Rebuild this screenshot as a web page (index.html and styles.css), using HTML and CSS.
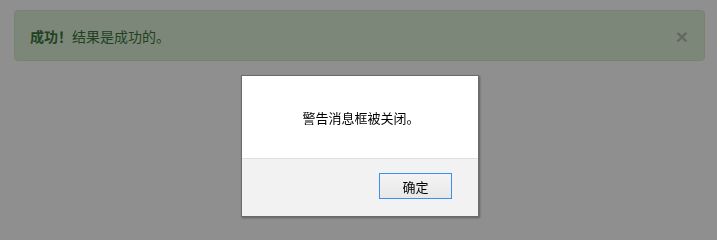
FILE: index.html
```html
<!DOCTYPE html>
<html lang="zh">
<head>
<meta charset="utf-8">
<link rel="stylesheet" href="styles.css">
</head>
<body>
<div class="page">
  <div class="alert">
    <span class="msg"><strong>成功！</strong>结果是成功的。</span>
    <span class="close">×</span>
  </div>
</div>
<div class="overlay"></div>
<div class="dialog">
  <div class="dialog-body">警告消息框被关闭。</div>
  <div class="dialog-foot"><button class="ok">确定</button></div>
</div>
</body>
</html>
```
FILE: styles.css
```css
html, body { margin: 0; padding: 0; }
body {
  width: 717px; height: 233px; overflow: hidden;
  background: #ffffff;
  font-family: "Noto Sans CJK SC", "Liberation Sans", sans-serif;
}
.page { padding: 10px 12px 0 14px; }
.alert {
  height: 49px;
  box-sizing: content-box;
  background: #dff0d8;
  border: 1px solid #d6e9c6;
  border-radius: 4px;
  color: #3c763d;
  display: flex; align-items: center; justify-content: space-between;
  padding: 0 16px 0 15px;
  font-size: 14px;
}
.alert strong { font-weight: 700; }
.close {
  font-family: "Liberation Sans", sans-serif;
  font-size: 21px; font-weight: 700; color: #000; opacity: 0.22;
  line-height: 1; margin-top: 2px;
}
.overlay {
  position: fixed; inset: 0;
  background: rgba(0,0,0,0.44);
}
.dialog {
  position: fixed; left: 241px; top: 75px;
  width: 236px; height: 140px;
  background: #f2f2f2;
  border: 1px solid #6b6b6b;
  box-shadow: 1px 1px 2px rgba(0,0,0,0.35);
  display: flex; flex-direction: column;
}
.dialog-body {
  height: 82px;
  background: #fff;
  border-bottom: 1px solid #dfdfdf;
  display: flex; align-items: center; justify-content: center;
  font-size: 13px; color: #000;
  padding-left: 2px;
}
.dialog-foot {
  flex: 1;
  display: flex; justify-content: flex-end; align-items: flex-start;
  padding: 14px 26px 0 0;
}
.ok {
  width: 73px; height: 26px;
  border: 1px solid #3c8ef0;
  background: linear-gradient(#f4f4f4, #e8e8e8);
  font-family: "Noto Sans CJK SC", sans-serif;
  font-size: 13px; color: #000;
  padding: 0; border-radius: 0;
}
```
